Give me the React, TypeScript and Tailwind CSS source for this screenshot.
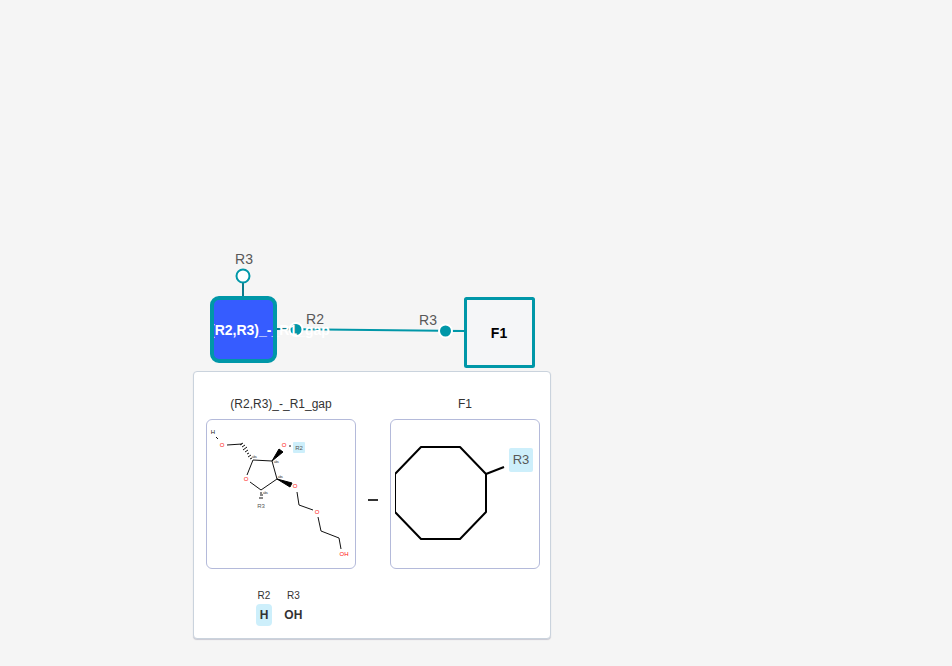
import type { ReactNode } from 'react';

const fontStack = "font-['Liberation_Sans',Arial,sans-serif]";

const OCTAGON = '421,447 460,447 486,474 486,512 460,539 421,539 395,512 395,474';

function Canvas() {
  return (
    <svg
      className="absolute left-0 top-0 h-full w-full"
      role="img"
      aria-label="Macromolecule: (R2,R3)_-_R1_gap linked to F1"
    >
      <g stroke="#0097a8" strokeWidth="2" fill="none">
        <path d="M243 296V283" stroke="#0b7c8c" />
        <path d="M276 329L464 331" />
        <path d="M276 329H290" stroke="#0b7c8c" />
        <path d="M452 331H465" />
      </g>
      <circle cx="243" cy="276" r="6.5" fill="#fff" stroke="#0097a8" strokeWidth="2" />
      <rect x="212" y="298" width="63" height="63" rx="7" fill="#365cff" />
      <circle cx="296" cy="329.5" r="6.5" fill="#0097a8" stroke="#fff" strokeWidth="2" />
      <circle cx="445.5" cy="331" r="6.5" fill="#0097a8" stroke="#fff" strokeWidth="2" />
      <rect x="465.5" y="298.5" width="68" height="68" rx="1" fill="#f5f6f8" stroke="#0097a8" strokeWidth="3" />
      <g fontSize="14" fill="#585858" textAnchor="middle">
        <text x="244" y="264">R3</text>
        <text x="315" y="324">R2</text>
        <text x="428" y="325">R3</text>
      </g>
      <g fontSize="14" fontWeight="700">
        <text x="210" y="335" fill="#fff">(R2,R3)_-_R1_gap</text>
        <text x="499" y="338" fill="#000" textAnchor="middle">F1</text>
      </g>
      {/* The outline sits above the label, which runs past the monomer's edges */}
      <rect x="212" y="298" width="63" height="63" rx="7" fill="none" stroke="#0097a8" strokeWidth="4" />
    </svg>
  );
}

function SugarStructure() {
  return (
    <svg viewBox="207 420 148 148" className="block h-full w-full" aria-label="Structure of (R2,R3)_-_R1_gap" role="img">
      <g stroke="#111" strokeWidth="1" fill="none">
        <path d="M216 437L218 439" />
        <path d="M227 445L242 444" />
        <path d="M250 482L261 490L277 479L272 461L253 460L247 475" />
        <path d="M289 446H291" />
        <path d="M297 492L299 505L313 510" />
        <path d="M318 517L321 531L339 538L341 549" />
        <path d="M240 445L243 443M242 447L245 445M243 450L247 447M245 452L248 450M247 454L249 453M248 457L251 455M250 459L252 458" />
        <path d="M260 493H262M260 495H263M259 498H263" />
      </g>
      <path d="M272 461L279 449L283 452Z" fill="#000" stroke="#000" strokeWidth="1" />
      <path d="M277 479L292 483L290 487Z" fill="#000" stroke="#000" strokeWidth="1" />
      <rect x="293" y="442" width="12" height="11" rx="1" fill="#cdeffb" />
      <g fontSize="6" fill="#222" textAnchor="middle">
        <text x="213" y="434">H</text>
        <text x="299" y="450" fill="#585858">R2</text>
        <text x="261" y="508" fill="#585858">R3</text>
      </g>
      <g fontSize="6" fill="#ff0d0d" textAnchor="middle">
        <text x="222" y="447">O</text>
        <text x="284" y="447">O</text>
        <text x="246" y="481">O</text>
        <text x="295" y="488">O</text>
        <text x="317" y="514">O</text>
        <text x="344" y="556">OH</text>
      </g>
      <g fontSize="3" fill="#222">
        <text x="252" y="458">abs</text>
        <text x="274" y="463">abs</text>
        <text x="278" y="478">abs</text>
        <text x="263" y="494">abs</text>
      </g>
    </svg>
  );
}

function OctagonStructure() {
  return (
    <svg viewBox="391 420 148 148" className="block h-full w-full" aria-label="Structure of F1" role="img">
      <polygon points={OCTAGON} fill="none" stroke="#000" strokeWidth="2" strokeLinejoin="round" />
      <path d="M393 472V514" stroke="#fff" strokeWidth="4" />
      <path d="M486 474L504 467" stroke="#000" strokeWidth="2" />
      <rect x="509" y="448" width="24" height="24" rx="2" fill="#cdeffb" />
      <text x="521" y="464" fontSize="13" fill="#585858" textAnchor="middle">R3</text>
    </svg>
  );
}

function Monomer({ name, children }: { name: string; children: ReactNode }) {
  return (
    <figure className="flex shrink-0 flex-col items-center gap-[7px]">
      <figcaption className="text-xs leading-4">{name}</figcaption>
      <div className="size-[150px] rounded-md border border-[#b4bada] bg-white">{children}</div>
    </figure>
  );
}

export default function App() {
  return (
    <main className={`relative min-h-screen overflow-hidden bg-[#f5f5f5] text-[#333333] ${fontStack}`}>
      <Canvas />
      <section
        aria-label="Connection details"
        className="absolute left-[193px] top-[371px] rounded-sm border border-[#cad3dd] bg-white pt-6 pr-[10px] pb-3 pl-3 shadow-[0_1px_1px_rgba(103,104,132,0.3)]"
      >
        <div className="flex items-end">
          <Monomer name="(R2,R3)_-_R1_gap">
            <SugarStructure />
          </Monomer>
          <div className="flex h-[150px] w-[34px] items-center justify-center pt-3">
            <span className="h-[2px] w-[10px] bg-[#333333]" />
          </div>
          <Monomer name="F1">
            <OctagonStructure />
          </Monomer>
        </div>
        <dl className="mt-[19px] flex w-[150px] justify-center gap-3 pr-1">
          <div className="flex flex-col items-center">
            <dt className="text-[10px] leading-4">R2</dt>
            <dd className="rounded-sm bg-[#cdeffb] px-1 text-xs leading-[22px] font-bold">H</dd>
          </div>
          <div className="flex flex-col items-center">
            <dt className="text-[10px] leading-4">R3</dt>
            <dd className="text-xs leading-[22px] font-bold">OH</dd>
          </div>
        </dl>
      </section>
    </main>
  );
}
